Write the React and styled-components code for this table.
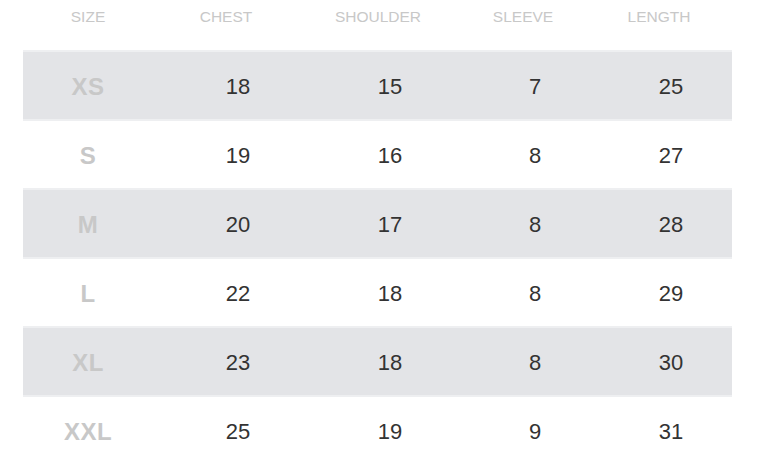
import React from 'react'
import styled, { createGlobalStyle } from 'styled-components'

const GlobalStyle = createGlobalStyle`
  html, body {
    margin: 0;
    padding: 0;
    background: #fff;
  }
  body {
    font-family: "Liberation Sans", Arial, Helvetica, sans-serif;
  }
`

const sizes = [
  { size: 'XS', chest: 18, shoulder: 15, sleeve: 7, length: 25 },
  { size: 'S', chest: 19, shoulder: 16, sleeve: 8, length: 27 },
  { size: 'M', chest: 20, shoulder: 17, sleeve: 8, length: 28 },
  { size: 'L', chest: 22, shoulder: 18, sleeve: 8, length: 29 },
  { size: 'XL', chest: 23, shoulder: 18, sleeve: 8, length: 30 },
  { size: 'XXL', chest: 25, shoulder: 19, sleeve: 9, length: 31 },
]

const Chart = styled.div`
  width: 709px;
  padding-left: 23px;
`

const HeadRow = styled.div`
  display: grid;
  grid-template-columns: 130px 146px 158px 132px 140px;
  height: 50px;
  padding-top: 8px;
  box-sizing: border-box;
`

const HeadCell = styled.div`
  text-align: center;
  font-size: 15.5px;
  line-height: 18px;
  color: #c8c8c8;
  text-transform: uppercase;
`

const Row = styled.div`
  display: grid;
  grid-template-columns: 130px 170px 134px 156px 116px;
  align-items: center;
  height: ${p => (p.$shaded ? '71px' : '67px')};
  box-sizing: border-box;
  padding-top: 3px;
  background: ${p => (p.$shaded ? '#e3e4e7' : '#fff')};
  border-top: ${p => (p.$shaded ? '2px solid #eeeff1' : 'none')};
  border-bottom: ${p => (p.$shaded ? '2px solid #eeeff1' : 'none')};
`

const SizeCell = styled.div`
  text-align: center;
  font-size: 24px;
  font-weight: 700;
  letter-spacing: 0.5px;
  color: #c8c8c8;
`

const ValueCell = styled.div`
  text-align: center;
  font-size: 22px;
  color: #333;
`

const headers = ['Size', 'Chest', 'Shoulder', 'Sleeve', 'Length']

export default function App() {
  return (
    <>
      <GlobalStyle />
      <Chart>
        <HeadRow>
          {headers.map(h => (
            <HeadCell key={h}>{h}</HeadCell>
          ))}
        </HeadRow>
        {sizes.map((r, i) => (
          <Row key={r.size} $shaded={i % 2 === 0}>
            <SizeCell>{r.size}</SizeCell>
            <ValueCell>{r.chest}</ValueCell>
            <ValueCell>{r.shoulder}</ValueCell>
            <ValueCell>{r.sleeve}</ValueCell>
            <ValueCell>{r.length}</ValueCell>
          </Row>
        ))}
      </Chart>
    </>
  )
}
